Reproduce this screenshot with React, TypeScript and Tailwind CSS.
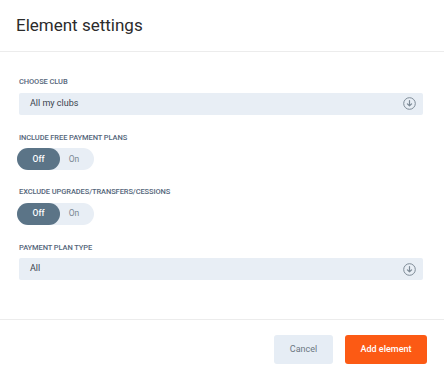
function ArrowCircle() {
  return (
    <svg width="13" height="13" viewBox="0 0 13 13" fill="none" className="shrink-0">
      <circle cx="6.5" cy="6.5" r="5.8" stroke="#7d8a96" strokeWidth="1" />
      <path d="M6.5 3.6v5.2M4.4 6.8l2.1 2.1 2.1-2.1" stroke="#7d8a96" strokeWidth="1.2" strokeLinecap="round" strokeLinejoin="round" />
    </svg>
  );
}

function Label({ children }: { children: string }) {
  return (
    <div className="text-[7.5px] font-medium uppercase leading-none tracking-[-0.1px] text-[#55667a]">
      {children}
    </div>
  );
}

function Select({ value }: { value: string }) {
  return (
    <div className="mr-[2px] flex h-[22px] items-center justify-between rounded-[2px] bg-[#e8eef5] pl-[11px] pr-[7px] text-[9px] text-[#3a434d]">
      <span>{value}</span>
      <ArrowCircle />
    </div>
  );
}

function Toggle() {
  return (
    <div className="flex h-[22px] w-[77px] rounded-full bg-[#e8eef5] text-[8.5px]">
      <div className="flex w-[43px] items-center justify-center rounded-full bg-[#5b7487] font-medium text-white">
        Off
      </div>
      <div className="flex flex-1 items-center justify-center pr-[6px] text-[#7a8793]">On</div>
    </div>
  );
}

export default function App() {
  return (
    <div className="h-[382px] w-[444px] bg-white font-['Roboto',sans-serif]">
      <header className="flex h-[52px] items-center border-b border-[#ececec] px-[16px]">
        <h1 className="text-[17px] text-[#2b2b2b]">Element settings</h1>
      </header>

      <main className="flex h-[267px] flex-col px-[19px] pt-[26px]">
        <div className="flex flex-col gap-[7px]">
          <Label>Choose club</Label>
          <Select value="All my clubs" />
        </div>
        <div className="mt-[19px] flex flex-col gap-[7px]">
          <Label>Include free payment plans</Label>
          <div className="-ml-[2px]"><Toggle /></div>
        </div>
        <div className="mt-[18px] flex flex-col gap-[7px]">
          <Label>Exclude upgrades/transfers/cessions</Label>
          <div className="-ml-[2px]"><Toggle /></div>
        </div>
        <div className="mt-[19px] flex flex-col gap-[7px]">
          <Label>Payment plan type</Label>
          <Select value="All" />
        </div>
      </main>

      <footer className="flex justify-end gap-[12px] border-t border-[#ececec] pr-[17px] pt-[15px]">
        <button className="h-[29px] w-[59px] rounded-[3px] bg-[#e6edf5] text-[9px] text-[#6c7782]">
          Cancel
        </button>
        <button className="h-[29px] w-[82px] rounded-[3px] bg-[#fc5a14] text-[9px] font-medium text-white">
          Add element
        </button>
      </footer>
    </div>
  );
}
